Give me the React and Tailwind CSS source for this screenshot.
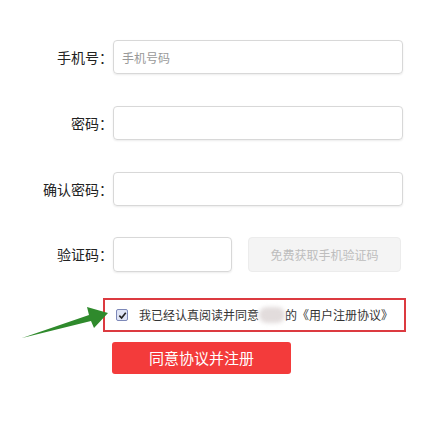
import React from "react";

const font = { fontFamily: '"Noto Sans CJK SC", "Noto Sans", sans-serif' };

const Field = ({ label, placeholder, top }) => (
    <div className={`flex items-center ${top}`}>
        <label className="w-[113px] shrink-0 text-right text-[14px] text-[#222]">
            {label}
        </label>
        <input
            className="w-[290px] h-[34px] rounded-[4px] border border-[#d8d8d8] shadow-[0_1px_2px_rgba(0,0,0,0.08)] px-2 text-[12px] text-[#333] placeholder:text-[#999] outline-none"
            placeholder={placeholder}
        />
    </div>
);

export default function App() {
    return (
        <div className="relative w-[423px] h-[423px] bg-white overflow-hidden" style={font}>
            <div className="flex flex-col pt-[40px]">
                <Field label="手机号：" placeholder="手机号码" top="" />
                <Field label="密码：" top="mt-[32px]" />
                <Field label="确认密码：" top="mt-[32px]" />

                {/* verification code */}
                <div className="flex items-center mt-[31px]">
                    <label className="w-[113px] shrink-0 text-right text-[14px] text-[#222]">
                        验证码：
                    </label>
                    <input className="w-[119px] h-[35px] rounded-[4px] border border-[#d8d8d8] shadow-[0_1px_2px_rgba(0,0,0,0.08)] outline-none" />
                    <button className="ml-[16px] w-[153px] h-[35px] rounded-[4px] bg-[#f4f4f4] border border-[#ececec] text-[12px] text-[#bdbdbd]">
                        免费获取手机验证码
                    </button>
                </div>

                {/* agreement */}
                <div className="ml-[103px] mt-[26px] w-[303px] h-[34px] border-2 border-[#dc3a40] flex items-center pl-[11px]">
                    <span className="w-[12px] h-[12px] rounded-[2px] border border-[#7d88b8] bg-[#dfe4f5] flex items-center justify-center">
                        <svg width="9" height="9" viewBox="0 0 10 10">
                            <path d="M1.5 5.2 L4 7.8 L8.6 2" fill="none" stroke="#222" strokeWidth="1.8" />
                        </svg>
                    </span>
                    <span className="ml-[11px] text-[12px] text-[#333] whitespace-nowrap flex items-center">
                        我已经认真阅读并同意
                        <span className="inline-block w-[26px] h-[16px] rounded-full bg-[#e2dcdc] blur-[2px]" />
                        的《用户注册协议》
                    </span>
                </div>

                <button className="ml-[112px] mt-[10px] w-[179px] h-[32px] rounded-[3px] bg-[#f33b3b] text-white text-[15px]">
                    同意协议并注册
                </button>
            </div>

            {/* annotation arrow */}
            <svg className="absolute left-0 top-0" width="423" height="423">
                <polygon
                    points="22,338 89,315 87,307 108,313 94,328 91,321"
                    fill="#2f8a2c"
                />
            </svg>
        </div>
    );
}
